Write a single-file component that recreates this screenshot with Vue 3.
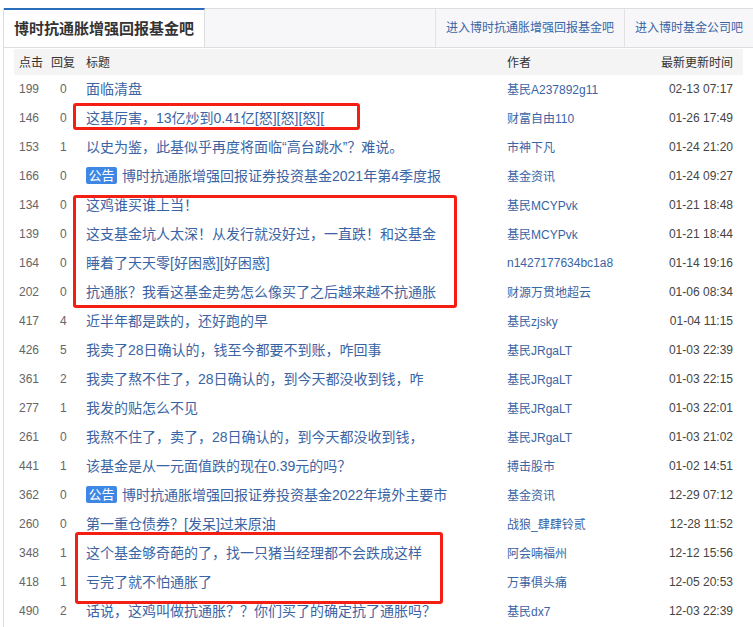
<script setup>
const rows = [
  ['199','0','面临清盘','基民A237892g11','02-13 07:17'],
  ['146','0','这基厉害，13亿炒到0.41亿[怒][怒][怒][','财富自由110','01-26 17:49'],
  ['153','1','以史为鉴，此基似乎再度将面临“高台跳水”？难说。','市神下凡','01-24 21:20'],
  ['166','0','博时抗通胀增强回报证券投资基金2021年第4季度报','基金资讯','01-24 09:27',true],
  ['134','0','这鸡谁买谁上当！','基民MCYPvk','01-21 18:48'],
  ['139','0','这支基金坑人太深！从发行就没好过，一直跌！和这基金','基民MCYPvk','01-21 18:44'],
  ['164','0','睡着了天天零[好困惑][好困惑]','n1427177634bc1a8','01-14 19:16'],
  ['202','0','抗通胀？我看这基金走势怎么像买了之后越来越不抗通胀','财源万贯地超云','01-06 08:34'],
  ['417','4','近半年都是跌的，还好跑的早','基民zjsky','01-04 11:15'],
  ['426','5','我卖了28日确认的，钱至今都要不到账，咋回事','基民JRgaLT','01-03 22:39'],
  ['361','2','我卖了熬不住了，28日确认的，到今天都没收到钱，咋','基民JRgaLT','01-03 22:15'],
  ['277','1','我发的贴怎么不见','基民JRgaLT','01-03 22:01'],
  ['261','0','我熬不住了，卖了，28日确认的，到今天都没收到钱，','基民JRgaLT','01-03 21:02'],
  ['441','1','该基金是从一元面值跌的现在0.39元的吗？','搏击股市','01-02 14:51'],
  ['362','0','博时抗通胀增强回报证券投资基金2022年境外主要市','基金资讯','12-29 07:12',true],
  ['260','0','第一重仓债券？[发呆]过来原油','战狼_肆肆铃贰','12-28 11:52'],
  ['348','1','这个基金够奇葩的了，找一只猪当经理都不会跌成这样','阿会喃福州','12-12 15:56'],
  ['418','1','亏完了就不怕通胀了','万事俱头痛','12-05 20:53'],
  ['490','2','话说，这鸡叫做抗通胀？？你们买了的确定抗了通胀吗？','基民dx7','12-03 22:39'],
]
</script>

<template>
  <div class="page">
    <div class="panel">
      <div class="tabs">
        <div class="tab-active">博时抗通胀增强回报基金吧</div>
        <div class="tab-fill"></div>
        <a class="tab-link">进入博时抗通胀增强回报基金吧</a>
        <a class="tab-link narrow">进入博时基金公司吧</a>
      </div>
      <div class="list">
        <div class="row head">
          <span class="c-click">点击</span>
          <span class="c-reply">回复</span>
          <span class="c-title">标题</span>
          <span class="c-author">作者</span>
          <span class="c-time">最新更新时间</span>
        </div>
        <div class="row" v-for="r in rows" :key="r[0] + r[4]">
          <span class="c-click num">{{ r[0] }}</span>
          <span class="c-reply num">{{ r[1] }}</span>
          <span class="c-title link"><em v-if="r[5]" class="tag">公告</em>{{ r[2] }}</span>
          <span class="c-author link">{{ r[3] }}</span>
          <span class="c-time dark">{{ r[4] }}</span>
        </div>
      </div>
    </div>
    <i class="mark m1"></i>
    <i class="mark m2"></i>
    <i class="mark m3"></i>
  </div>
</template>

<style scoped>
.page {
  position: relative;
  width: 753px;
  height: 627px;
  overflow: hidden;
  background: #fff;
  font-family: "Liberation Sans", "Noto Sans CJK SC", sans-serif;
}
.panel {
  box-sizing: border-box;
  width: 750px;
  height: 640px;
  margin: 8px 0 0 3px;
  border-left: 1px solid #ddd;
  border-top: 1px solid #ddd;
}
.tabs {
  display: flex;
  height: 38px;
  background: #f7f7f9;
  border-bottom: 1px solid #ddd;
}
.tab-active {
  box-sizing: border-box;
  width: 201px;
  height: 39px;
  margin-top: -1px;
  padding-left: 10px;
  border-top: 2px solid #2a6ebb;
  border-right: 1px solid #ddd;
  background: #fff;
  color: #333;
  font-size: 15px;
  font-weight: bold;
  line-height: 37px;
}
.tab-fill { flex: 1; }
.tab-link {
  box-sizing: border-box;
  width: 189px;
  padding-left: 10px;
  border-left: 1px solid #e2e2e2;
  color: #3a64a4;
  font-size: 12px;
  line-height: 39px;
}
.tab-link.narrow { width: 129px; }
.list {
  width: 729px;
  margin: 1px 0 0 10px;
}
.row {
  display: flex;
  box-sizing: border-box;
  height: 29px;
  padding-bottom: 2px;
  align-items: center;
  font-size: 12px;
  color: #333;
}
.head {
  height: 26px;
  background: #f4f4f4;
}
.c-click { width: 37px; padding-left: 5px; box-sizing: border-box; }
.c-reply { width: 35px; box-sizing: border-box; }
.c-title { width: 421px; white-space: nowrap; overflow: hidden; }
.c-author { width: 132px; white-space: nowrap; }
.c-time { width: 94px; text-align: right; white-space: nowrap; }
.row:not(.head) .c-reply { padding-left: 9px; }
.num { color: #666; }
.dark { color: #444; }
.link { color: #3a64a4; }
.row:not(.head) .c-title { font-size: 14px; line-height: 20px; }
.tag {
  display: inline-block;
  width: 31px;
  height: 17px;
  margin-right: 5px;
  border-radius: 2px;
  background: #3f87e5;
  color: #fff;
  font-size: 13px;
  font-style: normal;
  line-height: 17px;
  text-align: center;
  vertical-align: 1px;
}
.mark {
  position: absolute;
  box-sizing: border-box;
  border: 3px solid #f41f12;
  border-radius: 3px;
}
.m1 { left: 73px; top: 103px; width: 287px; height: 27px; }
.m2 { left: 73px; top: 195px; width: 384px; height: 113px; }
.m3 { left: 75px; top: 532px; width: 368px; height: 72px; }
</style>
